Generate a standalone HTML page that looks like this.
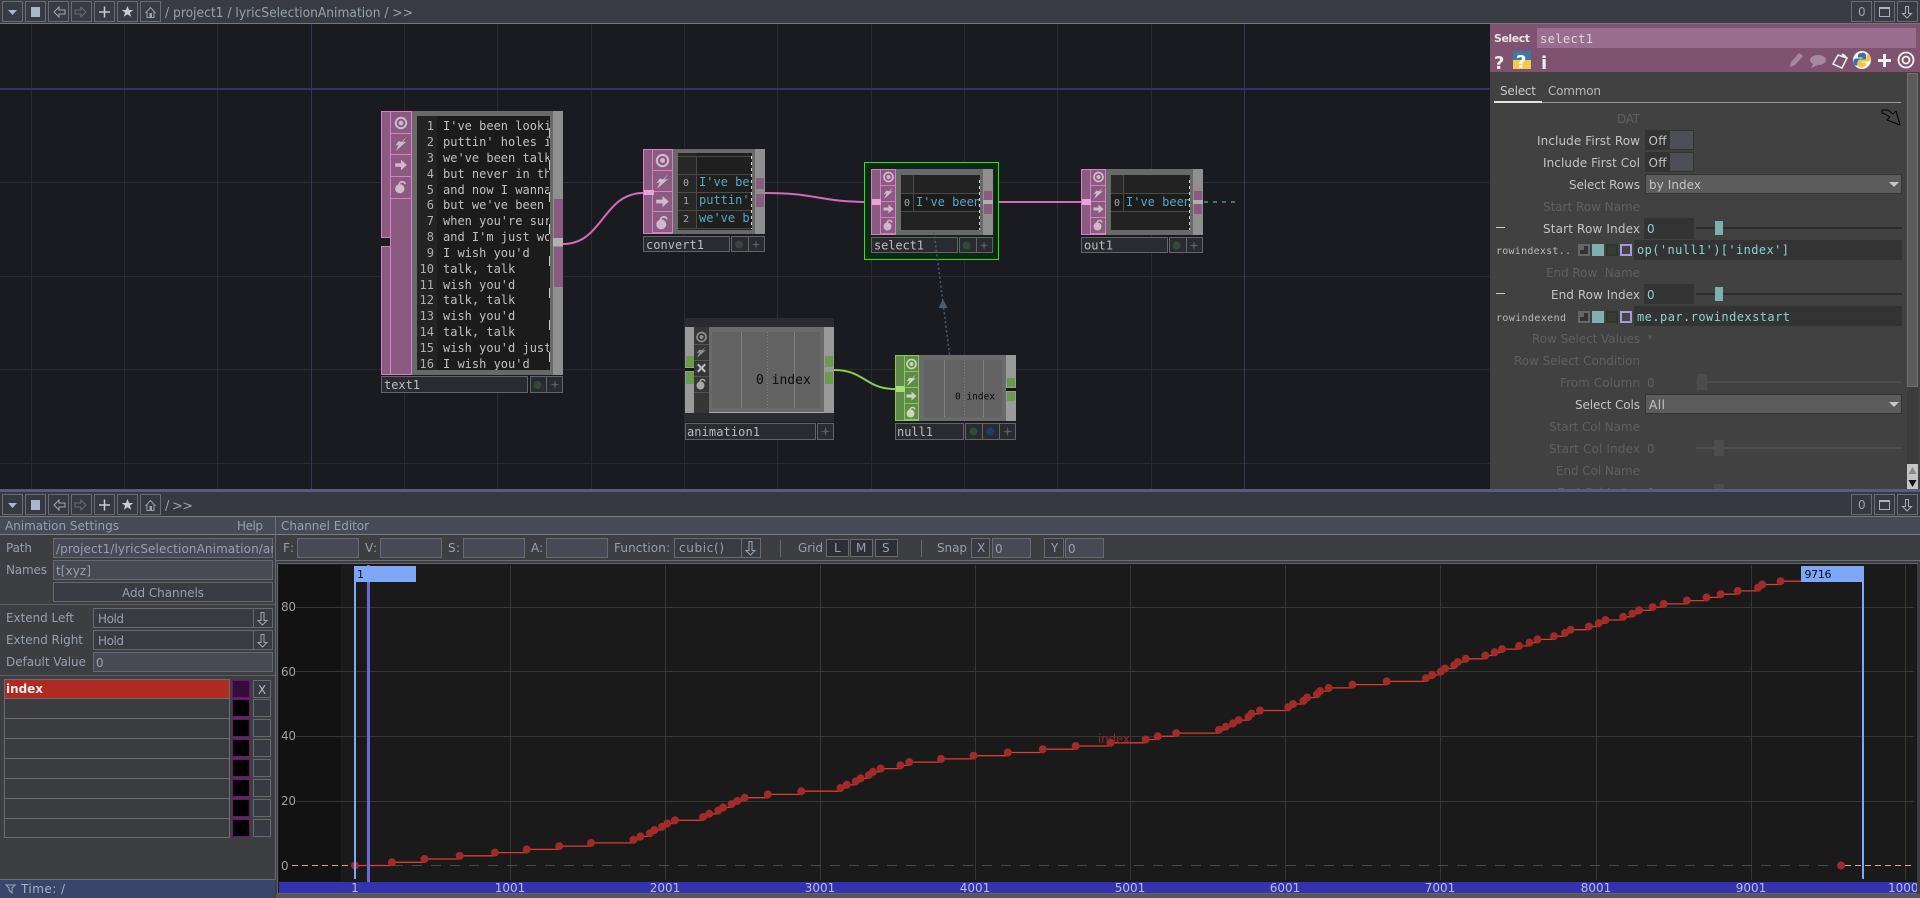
<!DOCTYPE html>
<html><head><meta charset="utf-8"><title>lyricSelectionAnimation</title>
<style>
html,body{margin:0;padding:0;background:#1a1b20;overflow:hidden}
svg{display:block}
text{white-space:pre}
.u{font-family:"DejaVu Sans","Liberation Sans",sans-serif;font-size:12px;fill:#c4c4c4}
.m{font-family:"DejaVu Sans Mono","Liberation Mono",monospace;font-size:12px;fill:#c0c0c0}
.d{fill:#5f5f5f}
.g{fill:#98a0ac}
.b{fill:none;stroke:#696c74}
.in{fill:#474a54;stroke:#666a72}
.nm{fill:#292b30;stroke:#62646a}
.teal{fill:#8ed2cf}
rect{shape-rendering:crispEdges}
</style></head><body>
<svg xmlns="http://www.w3.org/2000/svg" width="1920" height="898" viewBox="0 0 1920 898">
<defs>
<symbol id="t" viewBox="0 0 24 24"><circle cx="12" cy="12" r="9" fill="none" stroke="currentColor" stroke-width="3.4"/><circle cx="12" cy="12" r="4" fill="currentColor"/></symbol>
<symbol id="z" viewBox="0 0 24 24"><path fill="currentColor" d="M21 0L15 9l6-1L3 24l5-11-6 2L8 7l5 1.500z"/></symbol>
<symbol id="r" viewBox="0 0 24 24"><path fill="currentColor" d="M2 9h10V3l10 9-10 9v-6H2z"/></symbol>
<symbol id="l" viewBox="0 0 24 24"><circle cx="10" cy="15" r="8" fill="currentColor"/><path fill="none" stroke="currentColor" stroke-width="3" d="M9 8c0-6 9-7 10-1"/></symbol>
<symbol id="x" viewBox="0 0 24 24"><path fill="currentColor" d="M3 6l3-3 6 6 6-6 3 3-6 6 6 6-3 3-6-6-6 6-3-3 6-6z"/></symbol>
<symbol id="s" viewBox="0 0 24 24"><path fill="currentColor" d="M12 1l2 9 9 2-9 2-2 9-2-9-9-2 9-2z"/></symbol>
<g id="tb">
<rect class="b" x="2.5" y="1.5" width="20" height="20"/><path fill="#aab6cc" d="M8 10h9l-4.500 5z"/>
<rect class="b" x="25.500" y="1.500" width="20" height="20"/><rect x="31" y="7" width="9" height="10" fill="#aab6cc"/>
<rect class="b" x="48.500" y="1.500" width="20" height="20"/><path fill="none" stroke="#a0a8b8" d="M54 12l5-5v3h6v4h-6v3z"/>
<rect class="b" x="71.500" y="1.500" width="20" height="20"/><path fill="none" stroke="#686c74" d="M86 12l-5-5v3h-6v4h6v3z"/>
<rect class="b" x="94.500" y="1.500" width="20" height="20"/><path stroke="#c4ccd8" stroke-width="1.500" d="M104.500 6.500v11M99 12h11"/>
<rect class="b" x="117.500" y="1.500" width="20" height="20"/><path fill="#c4ccd8" d="M127.500 6l1.600 4h4.200l-3.400 2.600 1.300 4.200-3.700-2.500-3.700 2.500 1.300-4.200-3.400-2.600h4.200z"/>
<rect class="b" x="140.500" y="1.500" width="20" height="20"/><path fill="none" stroke="#9aa2ae" d="M145.500 13l5-5.500 5 5.500M147 12v5.500h7V12"/><rect x="149.500" y="13" width="2.500" height="4" fill="#9aa2ae"/>
</g>
<g id="tr">
<rect class="b" x="1851.500" y="1.500" width="20" height="20"/><text class="u g" x="1858" y="16">0</text>
<rect class="b" x="1874.500" y="1.500" width="20" height="20"/><rect x="1879.500" y="7.500" width="10" height="9" fill="none" stroke="#aab2c0"/><rect x="1879" y="7" width="11" height="2" fill="#aab2c0"/>
<rect class="b" x="1897.500" y="1.500" width="20" height="20"/><path fill="none" stroke="#a4acb8" d="M1905.500 6.500h3v7h3l-4.500 4.500-4.500-4.500h3z"/>
</g>
<clipPath id="c1"><rect x="417" y="116" width="132" height="254"/></clipPath>
<clipPath id="c2"><rect x="698" y="174" width="52" height="56"/></clipPath>
<clipPath id="c3"><rect x="914" y="193" width="65" height="18"/></clipPath>
<clipPath id="c4"><rect x="1124" y="193" width="65" height="18"/></clipPath>
<clipPath id="c5"><rect x="53" y="538" width="220" height="20"/></clipPath>
<clipPath id="c6"><rect x="1490" y="24" width="415" height="465"/></clipPath>
</defs>

<!-- network background -->
<rect x="0" y="24" width="1920" height="466" fill="#1a1b20"/>
<path stroke="#292a31" fill="none" d="M31.500 24V489M124.500 24V489M217.500 24V489M404.500 24V489M497.500 24V489M591.500 24V489M684.500 24V489M777.500 24V489M871.500 24V489M964.500 24V489M1057.500 24V489M1151.500 24V489M0 182.500H1490M0 276.500H1490M0 369.500H1490M0 463.500H1490"/>
<path stroke="#35355e" fill="none" d="M311.500 24V489M1244.500 24V489"/>
<rect x="0" y="88" width="1490" height="2" fill="#33336a"/>

<!-- top bar -->
<rect x="0" y="0" width="1920" height="23" fill="#383b44"/>
<rect x="0" y="23" width="1920" height="1" fill="#75777c"/>
<use href="#tb"/><use href="#tr"/>
<text class="u g" x="165" y="17" style="font-size:13px" textLength="248" lengthAdjust="spacingAndGlyphs">/ project1 / lyricSelectionAnimation / &gt;&gt;</text>

<!-- wires -->
<g fill="none">
<path stroke="#d46cb8" stroke-width="2" d="M563 244C603 244 603 193 643 193"/>
<path stroke="#d46cb8" stroke-width="2" d="M765 193C818 193 818 202 871 202"/>
<path stroke="#d46cb8" stroke-width="2" d="M993 202H1081"/>
<path stroke="#8ccf50" stroke-width="2" d="M834 370C865 370 865 389 895 389"/>
<path stroke="#4c7064" stroke-width="2" stroke-dasharray="4 5" d="M1204 202H1236"/>
</g>

<!-- text1 -->
<g style="color:#d2b8ce">
<rect x="381" y="111" width="182" height="264" fill="#696969"/>
<rect x="381.500" y="111.500" width="9" height="263" fill="#8a5a80" stroke="#d97ec6"/>
<rect x="381" y="238" width="10" height="8" fill="#1a1b20"/>
<path stroke="#d97ec6" fill="none" d="M381 237.500h10M381 246.500h10"/>
<rect x="390.500" y="111.500" width="21" height="263" fill="#8a5a80" stroke="#d97ec6"/>
<path stroke="#d97ec6" fill="none" d="M391 133.500h21M391 154.500h21M391 176.500h21M391 198.500h21"/>
<use href="#t" x="394" y="116" width="14" height="14"/><use href="#z" x="394" y="137" width="14" height="14"/><use href="#r" x="394" y="158" width="14" height="14"/><use href="#l" x="394" y="180" width="14" height="14"/>
<rect x="553" y="111" width="10" height="264" fill="#8f8f8f"/>
<rect x="554" y="199" width="9" height="39" fill="#8a5a80"/><rect x="553" y="238" width="10" height="8" fill="#b0b0b0"/><rect x="554" y="247" width="9" height="40" fill="#8a5a80"/>
<rect x="417" y="116" width="133" height="254" fill="#1b1b1b"/><rect x="417" y="116" width="20" height="254" fill="#232323"/>
</g>
<g clip-path="url(#c1)">
<g text-anchor="end">
<text class="m" x="434" y="130" style="fill:#b0b0b0">1</text><text class="m" x="434" y="146" style="fill:#b0b0b0">2</text><text class="m" x="434" y="162" style="fill:#b0b0b0">3</text><text class="m" x="434" y="178" style="fill:#b0b0b0">4</text><text class="m" x="434" y="194" style="fill:#b0b0b0">5</text><text class="m" x="434" y="209" style="fill:#b0b0b0">6</text><text class="m" x="434" y="225" style="fill:#b0b0b0">7</text><text class="m" x="434" y="241" style="fill:#b0b0b0">8</text><text class="m" x="434" y="257" style="fill:#b0b0b0">9</text><text class="m" x="434" y="273" style="fill:#b0b0b0">10</text><text class="m" x="434" y="289" style="fill:#b0b0b0">11</text><text class="m" x="434" y="304" style="fill:#b0b0b0">12</text><text class="m" x="434" y="320" style="fill:#b0b0b0">13</text><text class="m" x="434" y="336" style="fill:#b0b0b0">14</text><text class="m" x="434" y="352" style="fill:#b0b0b0">15</text><text class="m" x="434" y="368" style="fill:#b0b0b0">16</text>
</g>
<text class="m" x="443" y="130">I've been looking</text>
<text class="m" x="443" y="146">puttin' holes in</text>
<text class="m" x="443" y="162">we've been talking</text>
<text class="m" x="443" y="178">but never in the</text>
<text class="m" x="443" y="194">and now I wanna</text>
<text class="m" x="443" y="209">but we've been</text>
<text class="m" x="443" y="225">when you're sure</text>
<text class="m" x="443" y="241">and I'm just wo</text>
<text class="m" x="443" y="257">I wish you'd</text>
<text class="m" x="443" y="273">talk, talk</text>
<text class="m" x="443" y="289">wish you'd</text>
<text class="m" x="443" y="304">talk, talk</text>
<text class="m" x="443" y="320">wish you'd</text>
<text class="m" x="443" y="336">talk, talk</text>
<text class="m" x="443" y="352">wish you'd just</text>
<text class="m" x="443" y="368">I wish you'd</text>
</g>
<path stroke="#c8c8c8" stroke-dasharray="10 22" fill="none" d="M549.500 128V370"/>
<rect class="nm" x="381.500" y="376.500" width="146" height="16"/><rect class="nm" x="530.500" y="376.500" width="32" height="16"/>
<path stroke="#62646a" d="M546.500 377v16"/>
<circle cx="537.500" cy="385" r="4" fill="#35473a"/><use href="#s" x="550" y="379" width="10" height="11" style="color:#5a5c60"/>
<text class="m" x="384" y="389" textLength="36" style="fill:#bdbdbd">text1</text>

<!-- convert1 -->
<g style="color:#d2b8ce">
<rect x="643" y="149" width="122" height="85" fill="#696969"/>
<rect x="643.500" y="149.500" width="9" height="84" fill="#8a5a80" stroke="#d97ec6"/>
<rect x="652.500" y="149.500" width="20" height="84" fill="#8a5a80" stroke="#d97ec6"/>
<path stroke="#d97ec6" fill="none" d="M653 170.500h20M653 191.500h20M653 211.500h20M653 232.500h20"/>
<rect x="644" y="190" width="10" height="5" fill="#e6a4d8"/>
<use href="#t" x="655" y="153" width="15" height="15"/><use href="#z" x="655" y="174" width="15" height="15"/><use href="#r" x="655" y="194" width="15" height="15"/><use href="#l" x="655" y="215" width="15" height="15"/>
<rect x="755" y="149" width="10" height="85" fill="#8f8f8f"/>
<rect x="756" y="178" width="8" height="11" fill="#8a5a80"/><rect x="756" y="194" width="8" height="13" fill="#8a5a80"/>
<rect x="678" y="153" width="74" height="77" fill="#1f1f1f"/>
<rect x="678" y="153" width="18" height="77" fill="#272727"/>
<path stroke="#4a4a4a" fill="none" d="M678 156.500h74M678 174.500h74M678 192.500h74M678 210.500h74M678 228.500h74M696.500 156v73"/>
</g>
<text class="m" x="683" y="186" style="font-size:10px;fill:#a8a8a8">0</text><text class="m" x="683" y="204" style="font-size:10px;fill:#a8a8a8">1</text><text class="m" x="683" y="222" style="font-size:10px;fill:#a8a8a8">2</text>
<g clip-path="url(#c2)"><text class="m" x="699" y="186" style="fill:#5aa6c4">I've been</text><text class="m" x="699" y="204" style="fill:#5aa6c4">puttin'</text><text class="m" x="699" y="222" style="fill:#5aa6c4">we've been</text></g>
<path stroke="#d0d0d0" stroke-dasharray="3 3" fill="none" d="M751.500 156V229"/>
<rect class="nm" x="643.500" y="236.500" width="86" height="15"/><rect class="nm" x="731.500" y="236.500" width="33" height="15"/><path stroke="#62646a" d="M748.500 237v15"/>
<circle cx="739" cy="244.500" r="4" fill="#35473a"/><use href="#s" x="751" y="239" width="10" height="11" style="color:#5a5c60"/>
<text class="m" x="646" y="249" textLength="58" style="fill:#bdbdbd">convert1</text>

<!-- select1 -->
<rect x="864.500" y="162.500" width="134" height="97" fill="#0c2a12" stroke="#22e622"/>
<g style="color:#d2b8ce">
<rect x="871" y="169" width="122" height="66" fill="#696969"/>
<rect x="871.500" y="169.500" width="9" height="65" fill="#8a5a80" stroke="#d97ec6"/>
<rect x="880.500" y="169.500" width="15" height="65" fill="#8a5a80" stroke="#d97ec6"/>
<path stroke="#d97ec6" fill="none" d="M881 185.500h15M881 201.500h15M881 217.500h15M881 233.500h15"/>
<rect x="872" y="199" width="9" height="6" fill="#e6a4d8"/>
<use href="#t" x="882.500" y="171" width="12" height="12"/><use href="#z" x="882.500" y="187" width="12" height="12"/><use href="#r" x="882.500" y="203" width="12" height="12"/><use href="#l" x="882.500" y="219" width="12" height="12"/>
<rect x="983" y="169" width="10" height="66" fill="#8f8f8f"/>
<rect x="984" y="191" width="8" height="9" fill="#8a5a80"/><rect x="983" y="200" width="10" height="4" fill="#b0b0b0"/><rect x="984" y="204" width="8" height="10" fill="#8a5a80"/>
<rect x="901" y="175" width="79" height="55" fill="#222"/>
<rect x="901" y="175" width="12" height="36" fill="#282828"/>
<rect x="901" y="193" width="79" height="18" fill="#1c1c1c"/>
<path stroke="#4a4a4a" fill="none" d="M901 193.500h79M901 211.500h79M913.500 175v36"/>
</g>
<text class="m" x="904" y="206" style="font-size:10px;fill:#a8a8a8">0</text>
<g clip-path="url(#c3)"><text class="m" x="916" y="206" style="fill:#5aa6c4">I've been</text></g>
<path stroke="#d0d0d0" stroke-dasharray="3 3" fill="none" d="M979.500 180V230"/>
<rect class="nm" x="871.500" y="237.500" width="86" height="15"/><rect class="nm" x="959.500" y="237.500" width="33" height="15"/><path stroke="#62646a" d="M976.500 238v15"/>
<circle cx="966.500" cy="245.500" r="4" fill="#35473a"/><use href="#s" x="979" y="240" width="10" height="11" style="color:#5a5c60"/>
<text class="m" x="874" y="249.500" textLength="50" style="fill:#bdbdbd">select1</text>

<!-- out1 -->
<g style="color:#d2b8ce">
<rect x="1081" y="169" width="122" height="66" fill="#696969"/>
<rect x="1081.500" y="169.500" width="9" height="65" fill="#8a5a80" stroke="#d97ec6"/>
<rect x="1090.500" y="169.500" width="15" height="65" fill="#8a5a80" stroke="#d97ec6"/>
<path stroke="#d97ec6" fill="none" d="M1091 185.500h15M1091 201.500h15M1091 217.500h15M1091 233.500h15"/>
<rect x="1082" y="199" width="9" height="6" fill="#e6a4d8"/>
<use href="#t" x="1092.500" y="171" width="12" height="12"/><use href="#z" x="1092.500" y="187" width="12" height="12"/><use href="#r" x="1092.500" y="203" width="12" height="12"/><use href="#l" x="1092.500" y="219" width="12" height="12"/>
<rect x="1193" y="169" width="10" height="66" fill="#8f8f8f"/>
<rect x="1194" y="191" width="8" height="9" fill="#8a5a80"/><rect x="1193" y="200" width="10" height="4" fill="#b0b0b0"/><rect x="1194" y="204" width="8" height="10" fill="#8a5a80"/>
<rect x="1111" y="175" width="79" height="55" fill="#222"/>
<rect x="1111" y="175" width="12" height="36" fill="#282828"/>
<rect x="1111" y="193" width="79" height="18" fill="#1c1c1c"/>
<path stroke="#4a4a4a" fill="none" d="M1111 193.500h79M1111 211.500h79M1123.500 175v36"/>
</g>
<text class="m" x="1114" y="206" style="font-size:10px;fill:#a8a8a8">0</text>
<g clip-path="url(#c4)"><text class="m" x="1126" y="206" style="fill:#5aa6c4">I've been</text></g>
<path stroke="#d0d0d0" stroke-dasharray="3 3" fill="none" d="M1189.500 180V230"/>
<rect class="nm" x="1081.500" y="237.500" width="86" height="15"/><rect class="nm" x="1169.500" y="237.500" width="33" height="15"/><path stroke="#62646a" d="M1186.500 238v15"/>
<circle cx="1176.500" cy="245.500" r="4" fill="#35473a"/><use href="#s" x="1189" y="240" width="10" height="11" style="color:#5a5c60"/>
<text class="m" x="1084" y="249.500" textLength="29" style="fill:#bdbdbd">out1</text>

<!-- dependency arrow -->
<path stroke="#4c5c6e" stroke-width="1.500" stroke-dasharray="2 2.500" fill="none" d="M934 232L950 358"/>
<path fill="#4c5c6e" d="M943 299l-4.500 9h9z"/>

<!-- animation1 -->
<g style="color:#8e8e8e">
<rect x="685" y="318" width="149" height="104" fill="#2a2b2e"/>
<rect x="685" y="327" width="149" height="86" fill="#6a6a6a"/>
<rect x="685" y="327" width="9" height="86" fill="#9a9a9a"/>
<rect x="694" y="327" width="15" height="86" fill="#363636"/>
<path stroke="#555" fill="none" d="M694 344.500h15M694 360.500h15M694 376.500h15M694 392.500h15"/>
<use href="#t" x="695.500" y="331" width="12" height="12"/><use href="#z" x="695.500" y="346" width="12" height="12"/><use href="#x" x="695.500" y="362" width="12" height="12" style="color:#bdbdbd"/><use href="#l" x="695.500" y="378" width="12" height="12" style="color:#a8a8a8"/>
<rect x="824" y="327" width="10" height="86" fill="#9a9a9a"/>
<rect x="686" y="356" width="8" height="11" fill="#6a9a4c"/><rect x="685" y="368" width="9" height="3" fill="#15161a"/><rect x="686" y="372" width="8" height="12" fill="#6a9a4c"/>
<rect x="825" y="356" width="8" height="11" fill="#6a9a4c"/><rect x="825" y="372" width="8" height="12" fill="#6a9a4c"/>
<rect x="712" y="332" width="108" height="76" fill="#626262"/>
<path stroke="#808080" fill="none" d="M741.500 332v76M794.500 332v76"/>
<path stroke="#808080" stroke-dasharray="1 2" fill="none" d="M767.500 332v76"/>
<rect x="709" y="412" width="115" height="1" fill="#aaa"/>
</g>
<text class="m" x="756" y="384" style="font-size:13px;fill:#0c0c0c">0 index</text>
<rect class="nm" x="685.500" y="423.500" width="130" height="16"/><rect class="nm" x="817.500" y="423.500" width="16" height="16"/>
<use href="#s" x="820" y="426" width="11" height="11" style="color:#5a5c60"/>
<text class="m" x="687" y="436" textLength="73" style="fill:#bdbdbd">animation1</text>

<!-- null1 -->
<g style="color:#c8d8b8">
<rect x="895" y="355" width="121" height="66" fill="#6a6a6a"/>
<rect x="895.500" y="355.500" width="9" height="65" fill="#5f8a48" stroke="#8cc860"/>
<rect x="904.500" y="355.500" width="14" height="65" fill="#5f8a48" stroke="#8cc860"/>
<path stroke="#8cc860" fill="none" d="M905 371.500h14M905 387.500h14M905 403.500h14M905 419.500h14"/>
<rect x="896" y="386" width="9" height="6" fill="#a6e070"/>
<use href="#t" x="905.500" y="358" width="12" height="12"/><use href="#z" x="905.500" y="374" width="12" height="12"/><use href="#r" x="905.500" y="390" width="12" height="12"/><use href="#l" x="905.500" y="406" width="12" height="12"/>
<rect x="1006" y="355" width="10" height="66" fill="#9a9a9a"/>
<rect x="1007" y="378" width="8" height="9" fill="#6a9a4c"/><rect x="1006" y="388" width="10" height="3" fill="#15161a"/><rect x="1007" y="392" width="8" height="9" fill="#6a9a4c"/>
<rect x="924" y="360" width="78" height="57" fill="#626262"/>
<path stroke="#808080" fill="none" d="M944.500 360v57M983.500 360v57"/>
<path stroke="#808080" stroke-dasharray="1 2" fill="none" d="M964.500 360v57"/>
</g>
<text class="m" x="955" y="399.500" style="font-size:9.500px;fill:#0c0c0c">0 index</text>
<rect class="nm" x="895.500" y="423.500" width="68" height="16"/><rect class="nm" x="965.500" y="423.500" width="50" height="16"/><path stroke="#62646a" d="M982.500 424v16M999.500 424v16"/>
<circle cx="973.500" cy="431.500" r="4" fill="#35473a"/><circle cx="990.500" cy="431.500" r="4" fill="#243a62"/><use href="#s" x="1002" y="426" width="11" height="11" style="color:#5a5c60"/>
<text class="m" x="897" y="436" textLength="36" style="fill:#bdbdbd">null1</text>

<!-- parameter panel -->
<rect x="1490" y="24" width="430" height="466" fill="#414141"/>
<rect x="1490" y="24" width="430" height="48" fill="#7f5370"/>
<text class="u" x="1494" y="42" textLength="36" style="font-size:11px;font-weight:bold;fill:#e4e4e4">Select</text>
<rect x="1537" y="28" width="379" height="20" fill="#9a6e8e"/>
<text class="m" x="1540" y="43" textLength="53" style="fill:#e0d8de">select1</text>
<text x="1494" y="69" style="font:bold 18px 'DejaVu Sans',sans-serif;fill:#eee">?</text>
<rect x="1513" y="51" width="18" height="9" fill="#3f78a8"/><rect x="1513" y="60" width="18" height="9" fill="#f2ca50"/>
<text x="1516" y="68" style="font:bold 18px 'DejaVu Sans',sans-serif;fill:#fff">?</text>
<text x="1541" y="69" style="font:bold 18px 'DejaVu Sans',sans-serif;fill:#eee">i</text>
<path fill="#a888a0" d="M1790 67l1-5 8-9 4 3-8 9z"/>
<ellipse cx="1818" cy="60" rx="8" ry="5" fill="#a888a0"/><path fill="#a888a0" d="M1811 68l3-6 4 3z"/>
<path fill="none" stroke="#f2f2f2" stroke-width="1.500" d="M1838 55l9 3-5 10-9-4z"/><path stroke="#f2f2f2" stroke-width="2" d="M1842 54l4 3"/>
<circle cx="1862" cy="60" r="9" fill="#f4f4f4"/>
<path fill="#3a70a8" d="M1862 53c-3 0-4 1-4 3v1.500h4.500v1h-6.500c-2 0-2.500 2-2.500 3.500s1 3.500 2.500 3.500h1.500v-2.500c0-1.500 1-2.500 2.500-2.500h4c1.500 0 2-1 2-2v-3c0-2-2-3-4-3z"/>
<path fill="#f0c640" transform="rotate(180 1862 60)" d="M1862 53c-3 0-4 1-4 3v1.500h4.500v1h-6.500c-2 0-2.500 2-2.500 3.500s1 3.500 2.500 3.500h1.500v-2.500c0-1.500 1-2.500 2.500-2.500h4c1.500 0 2-1 2-2v-3c0-2-2-3-4-3z"/>
<path stroke="#f2f2f2" stroke-width="3" d="M1884.500 54v13M1878 60.500h13"/>
<circle cx="1906" cy="60" r="7.500" fill="none" stroke="#f2f2f2" stroke-width="1.800"/><circle cx="1906" cy="60" r="3.500" fill="none" stroke="#f2f2f2" stroke-width="1.800"/>

<rect x="1907" y="73" width="11" height="391" fill="#3b3b3b"/>
<rect x="1907.500" y="73.500" width="10" height="313" fill="#5b5b5b" stroke="#707070"/>
<rect x="1907" y="464" width="11" height="25" fill="#c4c4c4"/>
<path fill="#8a8a8a" d="M1912.500 467l4 7h-8z"/><path fill="#111" d="M1908.500 480h8l-4 7z"/>

<g clip-path="url(#c6)">
<text class="u" x="1500" y="95" textLength="36" style="fill:#c6c6c6">Select</text>
<text class="u" x="1548" y="95" textLength="53" style="fill:#b8b8b8">Common</text>
<rect x="1494" y="102" width="407" height="1" fill="#9a9a9a"/><rect x="1494" y="101" width="48" height="2" fill="#e4e4e4"/>
<path fill="#444" stroke="#000" stroke-linejoin="round" d="M1882 110h6l5 4 3-3 4 14-13-5 3-3-5-3-3-1z"/>

<text class="u d" x="1617" y="123" textLength="23">DAT</text>
<text class="u" x="1537" y="145" textLength="103">Include First Row</text>
<rect x="1645" y="130" width="49" height="20" fill="#333"/><rect x="1670" y="131" width="23" height="18" fill="#4e4e56"/>
<text class="u" x="1648.500" y="145" textLength="18">Off</text>
<text class="u" x="1543" y="167" textLength="97">Include First Col</text>
<rect x="1645" y="152" width="49" height="20" fill="#333"/><rect x="1670" y="153" width="23" height="18" fill="#4e4e56"/>
<text class="u" x="1648.500" y="167" textLength="18">Off</text>
<text class="u" x="1569" y="189" textLength="71">Select Rows</text>
<rect x="1645.500" y="174.500" width="256" height="19" fill="#5c5c5c" stroke="#333"/>
<text class="u" x="1649" y="189" textLength="52">by Index</text>
<path fill="#c8c8c8" d="M1889 182h10l-5 5z"/>
<text class="u d" x="1543" y="211" textLength="97">Start Row Name</text>
<rect x="1496" y="227" width="9" height="1" fill="#c8c8c8"/>
<text class="u" x="1543" y="233" textLength="97">Start Row Index</text>
<rect x="1644" y="218" width="50" height="21" fill="#333"/>
<text class="u teal" x="1647" y="233" textLength="8">0</text>
<rect x="1696" y="227" width="206" height="2" fill="#2c2c2c"/><rect x="1715" y="221" width="8" height="14" fill="#7fb0ae"/>
<text class="m" x="1496" y="254" textLength="75" style="font-size:10px;fill:#bcbcbc">rowindexst..</text>
<rect x="1578" y="244" width="12" height="12" fill="#666"/><rect x="1580" y="246" width="8" height="8" fill="#333"/><rect x="1580" y="246" width="4" height="4" fill="#666"/>
<rect x="1592" y="244" width="12" height="12" fill="#7fb0ae"/>
<rect x="1606" y="244" width="12" height="12" fill="#2a3a22"/><rect x="1608" y="246" width="8" height="8" fill="#3a3a3a"/>
<rect x="1620" y="244" width="12" height="12" fill="#a898e0"/><rect x="1622" y="246" width="8" height="8" fill="#444"/>
<rect x="1634" y="240" width="268" height="20" fill="#333"/>
<text class="m teal" x="1637" y="254" textLength="152" style="fill:#8ed2cf">op('null1')['index']</text>

<text class="u d" x="1546" y="277" textLength="94">End Row  Name</text>
<rect x="1496" y="293" width="9" height="1" fill="#c8c8c8"/>
<text class="u" x="1551" y="299" textLength="89">End Row Index</text>
<rect x="1644" y="284" width="50" height="20" fill="#333"/>
<text class="u teal" x="1647" y="299" textLength="8">0</text>
<rect x="1696" y="293" width="206" height="2" fill="#2c2c2c"/><rect x="1715" y="287" width="8" height="14" fill="#7fb0ae"/>
<text class="m" x="1496" y="321" textLength="70" style="font-size:10px;fill:#bcbcbc">rowindexend</text>
<rect x="1578" y="311" width="12" height="12" fill="#666"/><rect x="1580" y="313" width="8" height="8" fill="#333"/><rect x="1580" y="313" width="4" height="4" fill="#666"/>
<rect x="1592" y="311" width="12" height="12" fill="#7fb0ae"/>
<rect x="1606" y="311" width="12" height="12" fill="#2a3a22"/><rect x="1608" y="313" width="8" height="8" fill="#3a3a3a"/>
<rect x="1620" y="311" width="12" height="12" fill="#a898e0"/><rect x="1622" y="313" width="8" height="8" fill="#444"/>
<rect x="1634" y="306" width="268" height="20" fill="#333"/>
<text class="m teal" x="1637" y="321" textLength="153" style="fill:#8ed2cf">me.par.rowindexstart</text>

<text class="u d" x="1532" y="343" textLength="108">Row Select Values</text>
<text class="u d" x="1647" y="343">*</text>
<text class="u d" x="1514" y="365" textLength="126">Row Select Condition</text>
<text class="u d" x="1560" y="387" textLength="80">From Column</text>
<text class="u d" x="1647" y="387" textLength="8">0</text>
<rect x="1696" y="381" width="206" height="2" fill="#4c4c4c"/><rect x="1697" y="374" width="10" height="16" fill="#4c4c4c"/>
<text class="u" x="1575" y="409" textLength="65">Select Cols</text>
<rect x="1645.500" y="394.500" width="256" height="19" fill="#5c5c5c" stroke="#333"/>
<text class="u" x="1649" y="409" textLength="16">All</text>
<path fill="#c8c8c8" d="M1889 402h10l-5 5z"/>
<text class="u d" x="1549" y="431" textLength="91">Start Col Name</text>
<text class="u d" x="1549" y="453" textLength="91">Start Col Index</text>
<text class="u d" x="1647" y="453" textLength="8">0</text>
<rect x="1696" y="447" width="206" height="2" fill="#4c4c4c"/><rect x="1714" y="440" width="10" height="16" fill="#4c4c4c"/>
<text class="u d" x="1556" y="475" textLength="84">End Col Name</text>
<text class="u d" x="1557" y="497" textLength="83">End Col Index</text>
<text class="u d" x="1647" y="497" textLength="8">0</text>
<rect x="1714" y="484" width="10" height="16" fill="#4c4c4c"/>
</g>

<!-- bottom area -->
<rect x="0" y="489" width="1920" height="409" fill="#3c3e42"/>
<rect x="0" y="489" width="1920" height="3" fill="#5c5a7e"/>
<rect x="0" y="492" width="1920" height="24" fill="#363942"/>
<rect x="0" y="516" width="1920" height="1" fill="#7a7c82"/>
<g transform="translate(0,493)"><use href="#tb"/><use href="#tr"/></g>
<text class="u g" x="165" y="510" textLength="28" style="font-size:13px">/ &gt;&gt;</text>
<rect x="0" y="517" width="1920" height="17" fill="#474b57"/>
<rect x="0" y="534" width="1920" height="1" fill="#7a7c82"/>
<rect x="275" y="517" width="1" height="363" fill="#6a6c72"/>
<text class="u g" x="5" y="530" textLength="114">Animation Settings</text>
<text class="u g" x="237" y="530" textLength="26">Help</text>
<text class="u g" x="281" y="530" textLength="88">Channel Editor</text>

<!-- left settings -->
<text class="u g" x="6" y="552" textLength="26">Path</text>
<rect class="in" x="53.500" y="538.500" width="219" height="19"/>
<g clip-path="url(#c5)"><text class="u g" x="56" y="553" textLength="222">/project1/lyricSelectionAnimation/an</text></g>
<text class="u g" x="6" y="574" textLength="41">Names</text>
<rect class="in" x="53.500" y="560.500" width="219" height="19"/>
<text class="u g" x="56" y="575" textLength="35">t[xyz]</text>
<rect x="53.500" y="582.500" width="219" height="19" fill="#383b42" stroke="#666a72"/>
<text class="u g" x="122" y="597" textLength="82">Add Channels</text>
<rect x="0" y="604" width="275" height="1" fill="#5c5e64"/>
<text class="u g" x="6" y="622" textLength="68">Extend Left</text>
<rect x="93.500" y="608.500" width="179" height="19" fill="#383b42" stroke="#666a72"/><path stroke="#666a72" d="M253.500 609v18"/>
<path fill="none" stroke="#a0a4ae" d="M261 612.500h3v8h3l-4.500 4.500-4.500-4.500h3z"/>
<text class="u g" x="98" y="623" textLength="26">Hold</text>
<text class="u g" x="6" y="644" textLength="77">Extend Right</text>
<rect x="93.500" y="630.500" width="179" height="19" fill="#383b42" stroke="#666a72"/><path stroke="#666a72" d="M253.500 631v18"/>
<path fill="none" stroke="#a0a4ae" d="M261 634.500h3v8h3l-4.500 4.500-4.500-4.500h3z"/>
<text class="u g" x="98" y="645" textLength="26">Hold</text>
<text class="u g" x="6" y="666" textLength="80">Default Value</text>
<rect x="93.500" y="652.500" width="179" height="19" fill="#474a54" stroke="#666a72"/>
<text class="u g" x="96" y="667" textLength="8">0</text>
<rect x="0" y="675" width="275" height="1" fill="#5c5e64"/>

<!-- channel list -->
<rect x="4.500" y="679.500" width="225" height="158" fill="#3a3c40" stroke="#6a6c70"/>
<rect x="5" y="680" width="224" height="18" fill="#b02a24"/>
<path stroke="#6a6c70" fill="none" d="M5 698.500h224M5 718.500h224M5 738.500h224M5 758.500h224M5 778.500h224M5 798.500h224M5 818.500h224"/>
<text class="u" x="6" y="693" textLength="37" style="font-weight:bold;fill:#ececec">index</text>
<g stroke="#7a0a7a" fill="#000">
<rect x="232.500" y="680.500" width="17" height="17" fill="#340c38"/>
<rect x="232.500" y="699.500" width="17" height="17"/><rect x="232.500" y="719.500" width="17" height="17"/><rect x="232.500" y="739.500" width="17" height="17"/><rect x="232.500" y="759.500" width="17" height="17"/><rect x="232.500" y="779.500" width="17" height="17"/><rect x="232.500" y="799.500" width="17" height="17"/><rect x="232.500" y="819.500" width="17" height="17"/>
</g>
<g stroke="#686a70" fill="#373a42">
<rect x="253.500" y="680.500" width="17" height="17"/>
<rect x="253.500" y="699.500" width="17" height="17"/><rect x="253.500" y="719.500" width="17" height="17"/><rect x="253.500" y="739.500" width="17" height="17"/><rect x="253.500" y="759.500" width="17" height="17"/><rect x="253.500" y="779.500" width="17" height="17"/><rect x="253.500" y="799.500" width="17" height="17"/><rect x="253.500" y="819.500" width="17" height="17"/>
</g>
<text class="u g" x="258" y="694" style="fill:#b8bcc8">X</text>

<!-- time bar -->
<rect x="0" y="879" width="275" height="19" fill="#39456a"/>
<rect x="0" y="879" width="275" height="1" fill="#6a6c72"/>
<path fill="none" stroke="#9aa8c0" d="M6 885h9l-3 3v5l-3-3v-2z"/>
<text class="u" x="21" y="893" textLength="44" style="fill:#a6b0c4">Time: /</text>

<!-- channel editor toolbar -->
<rect x="276" y="560" width="1644" height="1" fill="#6a6c72"/>
<text class="u g" x="283" y="552" textLength="11">F:</text><rect class="in" x="297.500" y="538.500" width="61" height="19"/>
<text class="u g" x="365" y="552" textLength="12">V:</text><rect class="in" x="380.500" y="538.500" width="61" height="19"/>
<text class="u g" x="448" y="552" textLength="12">S:</text><rect class="in" x="463.500" y="538.500" width="61" height="19"/>
<text class="u g" x="531" y="552" textLength="12">A:</text><rect class="in" x="546.500" y="538.500" width="61" height="19"/>
<text class="u g" x="614" y="552" textLength="56">Function:</text>
<rect x="674.500" y="538.500" width="86" height="19" fill="#383b42" stroke="#666a72"/><path stroke="#666a72" d="M741.500 539v18"/>
<text class="u g" x="679" y="552" textLength="45">cubic()</text>
<path fill="none" stroke="#a0a4ae" d="M749 541.500h3v9h3l-4.500 4.500-4.500-4.500h3z"/>
<rect x="780" y="540" width="1" height="17" fill="#666a72"/>
<text class="u g" x="798" y="552" textLength="25">Grid</text>
<rect x="826.500" y="539.500" width="22" height="17" fill="#2c2f36" stroke="#686a70"/><text class="u g" x="834" y="552">L</text>
<rect x="850.500" y="539.500" width="22" height="17" fill="#2c2f36" stroke="#686a70"/><text class="u g" x="856" y="552">M</text>
<rect x="875.500" y="539.500" width="22" height="17" fill="#2c2f36" stroke="#686a70"/><text class="u g" x="882" y="552">S</text>
<rect x="921" y="540" width="1" height="17" fill="#666a72"/>
<text class="u g" x="937" y="552" textLength="30">Snap</text>
<rect x="971.500" y="538.500" width="18" height="19" fill="#383b42" stroke="#686a70"/><text class="u g" x="977" y="552">X</text>
<rect class="in" x="992.500" y="538.500" width="38" height="19"/><text class="u g" x="995" y="553" textLength="8">0</text>
<rect x="1044.500" y="538.500" width="19" height="19" fill="#383b42" stroke="#686a70"/><text class="u g" x="1051" y="552">Y</text>
<rect class="in" x="1065.500" y="538.500" width="38" height="19"/><text class="u g" x="1068" y="553" textLength="8">0</text>

<!-- graph -->
<rect x="277.500" y="563.500" width="1640" height="330" fill="#1a1a1a" stroke="#62646a"/>
<rect x="279" y="565" width="62" height="316" fill="#121212"/>
<rect x="1917" y="564" width="3" height="330" fill="#3c3e42"/>
<path stroke="#363636" fill="none" d="M510.500 565V880M665.500 565V880M820.500 565V880M975.500 565V880M1130.500 565V880M1285.500 565V880M1440.500 565V880M1596.500 565V880M1751.500 565V880M1905.500 565V880M296 607.500H1914M296 671.500H1914M296 736.500H1914M296 801.500H1914"/>
<path stroke="#4a4a4a" stroke-dasharray="10 9" fill="none" d="M355 865.500H1840"/>
<path stroke="#d8a4a0" stroke-dasharray="6 4" fill="none" d="M292 865.500H352M1845 865.500H1914"/>
<text class="u" x="281" y="611" textLength="15" style="fill:#a0a0a0">80</text>
<text class="u" x="281" y="676" textLength="15" style="fill:#a0a0a0">60</text>
<text class="u" x="281" y="740" textLength="15" style="fill:#a0a0a0">40</text>
<text class="u" x="281" y="805" textLength="15" style="fill:#a0a0a0">20</text>
<text class="u" x="281" y="870" textLength="8" style="fill:#a0a0a0">0</text>

<!-- curve -->
<path fill="none" stroke="#e03a32" stroke-width="1.300" d="M355 865.500H391.900V862.300H424.500V859H459.700V855.800H495V852.600H526.700V849.400H559.300V846.100H591V842.900H633.400V839.700H640.500V836.400H649.900V833.200H654.400V830H662V826.700H667.300V823.500H674.900V820.300H703V817H709.300V813.800H718.200V810.600H723.100V807.400H731.600V804.100H737.400V800.900H744.600V797.700H767.800V794.400H801.300V791.200H840.500V788H846.800V784.800H855.700V781.500H860.600V778.300H868.700V775.100H873.100V771.800H880.700V768.600H900.400V765.400H909.300V762.100H941V758.900H973.500V755.700H1007.800V752.500H1042.700V749.200H1075.700V746H1110.600V742.800H1145.600V739.500H1157.800V736.300H1176.200V733.100H1219V729.800H1225.800V726.600H1233.100V723.400H1238.600V720.200H1248.400V716.900H1251.500V713.700H1260V710.500H1288.200V707.200H1293.100V704H1303.500V700.800H1307.200V697.500H1317V694.300H1320.100V691.100H1328.700V687.900H1352.500V684.600H1386.800V681.400H1426V678.200H1432.200V674.900H1440.700V671.700H1445V668.500H1454.200V665.200H1457.900V662H1465.800V658.800H1485.400V655.500H1494.600V652.300H1502V649.100H1519.100V645.900H1529.500V642.600H1537.500V639.400H1554V636.200H1565V632.900H1570.600V629.700H1588.900V626.500H1598.700V623.200H1605.500V620H1623.200V616.800H1632.400V613.600H1639.100V610.300H1652.600V607.100H1663.600V603.900H1686.900V600.600H1706.500V597.400H1720.600V594.200H1737.800V590.900H1758V587.700H1762.200V584.500H1780.600V581.200H1810"/>
<path fill="none" stroke="#a12a2a" stroke-width="8" stroke-linecap="round" d="M355 865.500h0M391.900 862.300h0M424.500 859h0M459.700 855.800h0M495 852.600h0M526.700 849.400h0M559.300 846.100h0M591 842.900h0M633.400 839.700h0M640.500 836.400h0M649.900 833.200h0M654.400 830h0M662 826.700h0M667.300 823.500h0M674.900 820.300h0M703 817h0M709.300 813.800h0M718.200 810.600h0M723.100 807.400h0M731.600 804.100h0M737.400 800.900h0M744.600 797.700h0M767.800 794.400h0M801.300 791.200h0M840.500 788h0M846.800 784.800h0M855.700 781.500h0M860.600 778.300h0M868.700 775.100h0M873.100 771.800h0M880.700 768.600h0M900.400 765.400h0M909.300 762.100h0M941 758.900h0M973.500 755.700h0M1007.800 752.500h0M1042.700 749.200h0M1075.700 746h0M1110.600 742.800h0M1145.600 739.500h0M1157.800 736.300h0M1176.200 733.100h0M1219 729.800h0M1225.800 726.600h0M1233.100 723.400h0M1238.600 720.200h0M1248.400 716.900h0M1251.500 713.700h0M1260 710.500h0M1288.200 707.200h0M1293.100 704h0M1303.500 700.800h0M1307.200 697.500h0M1317 694.300h0M1320.100 691.100h0M1328.700 687.900h0M1352.500 684.600h0M1386.800 681.400h0M1426 678.200h0M1432.200 674.900h0M1440.700 671.700h0M1445 668.500h0M1454.200 665.200h0M1457.900 662h0M1465.800 658.800h0M1485.400 655.500h0M1494.600 652.300h0M1502 649.100h0M1519.100 645.900h0M1529.500 642.600h0M1537.500 639.400h0M1554 636.200h0M1565 632.900h0M1570.600 629.700h0M1588.900 626.500h0M1598.700 623.200h0M1605.500 620h0M1623.200 616.800h0M1632.400 613.600h0M1639.100 610.300h0M1652.600 607.100h0M1663.600 603.900h0M1686.900 600.600h0M1706.500 597.400h0M1720.600 594.200h0M1737.800 590.900h0M1758 587.700h0M1762.200 584.500h0M1780.600 581.200h0M1841 865.500h0"/>
<text class="u" x="1098" y="743" textLength="32" style="fill:#8a2a2a">index</text>

<!-- range bars -->
<rect x="354" y="566" width="2" height="313" fill="#7fa7f7"/>
<rect x="367" y="565" width="3" height="317" fill="#6a6ad6"/>
<rect x="354" y="566" width="62" height="16" fill="#7fa7f7"/>
<text class="u" x="357" y="578" style="font-size:11px;fill:#0c0c20">1</text>
<rect x="1862" y="566" width="2" height="313" fill="#7fa7f7"/>
<rect x="1801" y="566" width="63" height="16" fill="#7fa7f7"/>
<text class="u" x="1804.500" y="578" textLength="27" style="font-size:11px;fill:#0c0c20">9716</text>

<!-- time ruler -->
<rect x="279" y="882" width="1638" height="11" fill="#3333b0"/>
<g text-anchor="middle">
<text class="u" x="355" y="892" style="fill:#b8bcd8">1</text>
<text class="u" x="510" y="892" style="fill:#b8bcd8">1001</text>
<text class="u" x="665" y="892" style="fill:#b8bcd8">2001</text>
<text class="u" x="820" y="892" style="fill:#b8bcd8">3001</text>
<text class="u" x="975" y="892" style="fill:#b8bcd8">4001</text>
<text class="u" x="1130" y="892" style="fill:#b8bcd8">5001</text>
<text class="u" x="1285" y="892" style="fill:#b8bcd8">6001</text>
<text class="u" x="1440" y="892" style="fill:#b8bcd8">7001</text>
<text class="u" x="1596" y="892" style="fill:#b8bcd8">8001</text>
<text class="u" x="1751" y="892" style="fill:#b8bcd8">9001</text>
</g>
<svg x="1880" y="882" width="37" height="11"><text class="u" x="8" y="10" style="fill:#b8bcd8">10001</text></svg>
<rect x="276" y="894" width="1644" height="4" fill="#55575c"/>
</svg>
</body></html>
